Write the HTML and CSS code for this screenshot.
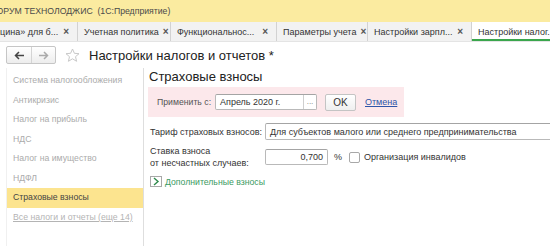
FILE: index.html
```html
<!DOCTYPE html><html>
<head>
  <meta charset="utf-8">
  <title>Настройки налогов и отчетов</title>
  <link rel="stylesheet" href="styles.css">
</head><body>

<div class="titlebar">ФОРУМ ТЕХНОЛОДЖИС&nbsp;&nbsp;(1С:Предприятие)</div>

<div class="tabs">
  <div class="tab"><span class="name">цина» для б...</span><span class="close">×</span></div>
  <div class="tab"><span class="name">Учетная политика</span><span class="close">×</span></div>
  <div class="tab"><span class="name">Функциональнос...</span><span class="close">×</span></div>
  <div class="tab"><span class="name">Параметры учета</span><span class="close">×</span></div>
  <div class="tab"><span class="name">Настройки зарпл...</span><span class="close">×</span></div>
  <div class="tab active"><span class="name">Настройки налог...</span></div>
</div>

<div class="toolbar">
  <div class="nav">
    <span class="nav-btn">
      <svg width="11" height="9" viewBox="0 0 11 9"><path d="M10 4.5H2M5 1L1.5 4.5L5 8" fill="none" stroke="#444" stroke-width="1.5"/></svg>
    </span>
    <span class="nav-btn">
      <svg width="11" height="9" viewBox="0 0 11 9"><path d="M1 4.5H9M6 1L9.5 4.5L6 8" fill="none" stroke="#aaa" stroke-width="1.5"/></svg>
    </span>
  </div>
  <svg class="star" width="15" height="15" viewBox="0 0 15 15"><path d="M7.5 1l1.9 4.3 4.6.4-3.5 3 1.1 4.6-4.1-2.5-4.1 2.5 1.1-4.6-3.5-3 4.6-.4z" fill="none" stroke="#c8c8c8"/></svg>
  <h1>Настройки налогов и отчетов *</h1>
</div>

<div class="content">
  <div class="sidebar">
    <div class="item">Система налогообложения</div>
    <div class="item">Антикризис</div>
    <div class="item">Налог на прибыль</div>
    <div class="item">НДС</div>
    <div class="item">Налог на имущество</div>
    <div class="item">НДФЛ</div>
    <div class="item current">Страховые взносы</div>
    <div class="item more">Все налоги и отчеты (еще 14)</div>
  </div>

  <div class="form">
    <h2>Страховые взносы</h2>
    <div class="apply">
      <span class="apply-label">Применить с:</span>
      <span class="field date"><span class="value">Апрель 2020 г.</span><span class="pick">...</span></span>
      <span class="button">OK</span>
      <a class="cancel" href="#">Отмена</a>
    </div>

    <div class="row">
      <span class="label">Тариф страховых взносов:</span>
      <span class="field wide"><span class="value">Для субъектов малого или среднего предпринимательства</span></span>
    </div>

    <div class="row rate">
      <span class="label">Ставка взноса<br>от несчастных случаев:</span>
      <span class="field num"><span class="value">0,700</span></span>
      <span class="unit">%</span>
      <span class="check"></span>
      <span class="check-label">Организация инвалидов</span>
    </div>

    <div class="expander">
      <span class="arrow"><svg width="8" height="9" viewBox="0 0 8 9"><path d="M2 1l4 3.5L2 8" fill="none" stroke="#2f8a4c" stroke-width="1.4"/></svg></span>
      <span class="expander-text">Дополнительные взносы</span>
    </div>
  </div>
</div>

</body></html>
```

FILE: styles.css
```css
* { box-sizing: border-box; }
body {
  margin: 0;
  width: 550px;
  height: 246px;
  overflow: hidden;
  font-family: "Liberation Sans", Arial, sans-serif;
  font-size: 9px;
  color: #333;
  background: #fff;
}

.titlebar {
  height: 22px;
  line-height: 22px;
  background: #fbeba0;
  color: #4a4a4a;
  font-size: 8.7px;
  white-space: nowrap;
  text-indent: -10px;
}

.tabs { display: flex; height: 20px; background: #f2f2f2; border-bottom: 1px solid #e4e4e4; font-size: 9px; }
.tab {
  display: flex;
  align-items: center;
  justify-content: space-between;
  gap: 4px;
  flex: none;
  height: 19px;
  padding: 0 8px 0 6px;
  border-right: 1px solid #d2d2d2;
  white-space: nowrap;
  overflow: hidden;
  color: #333;
}
.tab:nth-child(1) { width: 78px; padding-left: 0; }
.tab:nth-child(2) { width: 93px; }
.tab:nth-child(3) { width: 106px; }
.tab:nth-child(4) { width: 91px; }
.tab:nth-child(5) { width: 104px; }
.tab.active { flex: 1; background: #fff; border-right: 0; border-bottom: 2px solid #3aa64c; padding-top: 2px; }
.close { font-size: 10px; font-weight: bold; color: #555; }

.toolbar { display: flex; align-items: center; height: 18px; margin: 4px 0 0 6px; }
.nav {
  display: flex;
  height: 18px;
  border: 1px solid #c6c6c6;
  border-radius: 2px;
  background: linear-gradient(#fff, #ededed);
}
.nav-btn { display: flex; align-items: center; justify-content: center; width: 24px; }
.nav-btn + .nav-btn { border-left: 1px solid #d4d4d4; }
.star { margin-left: 9px; }
h1 { margin: 0 0 0 9px; font-size: 13px; font-weight: normal; color: #222; white-space: nowrap; }

.content { display: flex; height: 178px; margin: 4px 0 0 6px; }
.sidebar {
  width: 138px;
  flex: none;
  padding-top: 3px;
  border-left: 1px solid #f0f0f0;
  border-right: 1px solid #dedede;
  font-size: 8.7px;
}
.item { height: 19.5px; line-height: 19.5px; padding-left: 6px; color: #ababab; white-space: nowrap; }
.item.current { background: #fce48f; color: #444; }
.item.more { text-decoration: underline; color: #b4b4b4; }

.form { flex: 1; padding-left: 4px; overflow: hidden; white-space: nowrap; }
h2 { margin: 0 0 0 1px; font-size: 13px; line-height: 18px; font-weight: normal; color: #222; }

.apply {
  display: flex;
  align-items: center;
  width: 256px;
  height: 30px;
  margin-top: 1px;
  padding-left: 9px;
  background: #fce8eb;
}
.apply-label { width: 58px; flex: none; color: #555; font-size: 8.7px; }

.field {
  display: flex;
  align-items: center;
  flex: none;
  height: 16px;
  border: 1px solid #b9b9b9;
  border-top-color: #a4a4a4;
  border-radius: 2px;
  background: #fff;
  white-space: nowrap;
  overflow: hidden;
}
.value { padding: 0 4px; flex: 1; }
.date { width: 102px; }
.pick { width: 13px; height: 100%; border-left: 1px solid #cfcfcf; color: #777; font-size: 8px; text-align: center; line-height: 14px; }
.button {
  display: flex;
  align-items: center;
  justify-content: center;
  flex: none;
  width: 31px;
  height: 17px;
  margin-left: 8px;
  border: 1px solid #c4c4c4;
  border-radius: 2px;
  background: linear-gradient(#fff, #efefef);
  font-size: 10px;
}
.cancel { margin-left: 9px; color: #2e55a8; }

.row { display: flex; align-items: center; margin-top: 6px; }
.label { width: 117px; flex: none; padding-left: 2px; }
.wide { width: 300px; height: 17px; }
.rate { margin-top: 5px; }
.rate .label { line-height: 12px; }
.num { width: 63px; text-align: right; }
.unit { margin-left: 6px; }
.check { width: 11px; height: 11px; margin-left: 7px; border: 1px solid #a8a8a8; border-radius: 2px; }
.check-label { margin-left: 4px; }

.expander { display: flex; align-items: center; margin-top: 7px; margin-left: 2px; }
.arrow {
  display: flex;
  align-items: center;
  justify-content: center;
  width: 12px;
  height: 11px;
  border: 1px solid #a8a8a8;
}
.expander-text { margin-left: 3px; color: #3b9a5f; font-size: 8.7px; }
```
